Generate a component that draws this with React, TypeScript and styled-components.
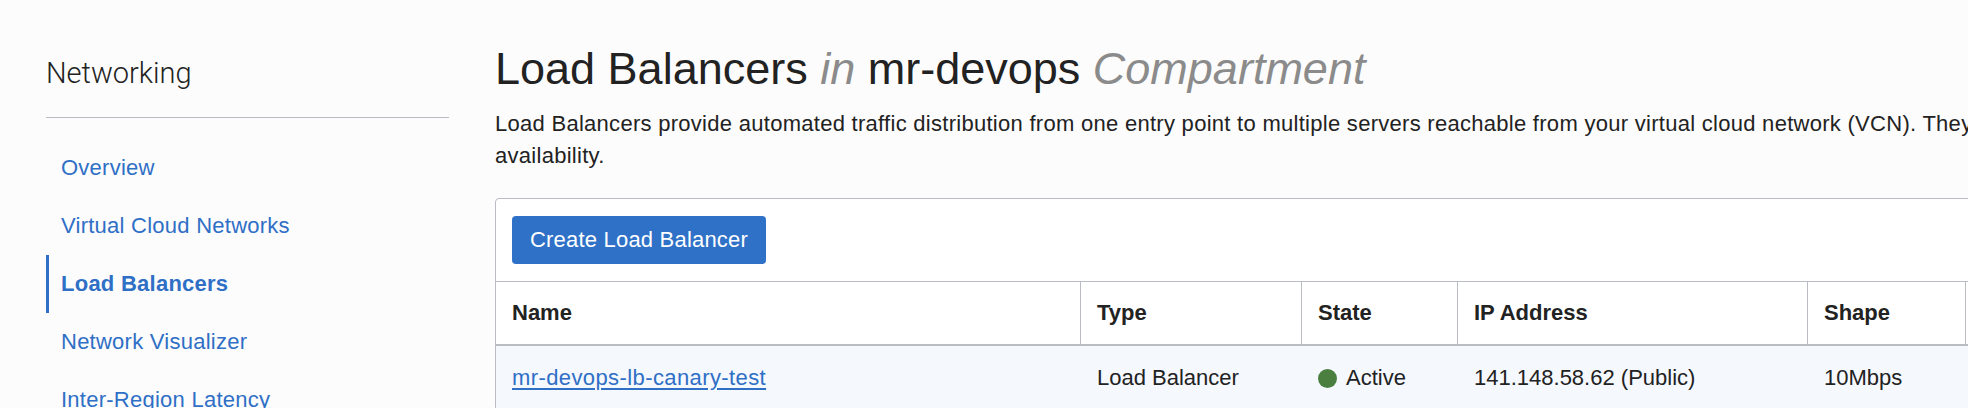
import React from "react";
import styled, { createGlobalStyle } from "styled-components";

// ─── Types ────────────────────────────────────────────────────────────────────

interface LoadBalancer {
  name:    string;
  type:    string;
  state:   string;
  ip:      string;
  shape:   string;
  created: string;
}

// ─── Data ─────────────────────────────────────────────────────────────────────

const navItems = [
  "Overview",
  "Virtual Cloud Networks",
  "Load Balancers",
  "Network Visualizer",
  "Inter-Region Latency",
];

const activeNav = "Load Balancers";

const columns = ["Name", "Type", "State", "IP Address", "Shape", "Created", "Tags"];

const balancers: LoadBalancer[] = [
  {
    name:    "mr-devops-lb-canary-test",
    type:    "Load Balancer",
    state:   "Active",
    ip:      "141.148.58.62 (Public)",
    shape:   "10Mbps",
    created: "Mon, Mar 2, 2020",
  },
];

const gridColumns = "584px 221px 156px 350px 158px 300px 200px";

// ─── Styled components ────────────────────────────────────────────────────────

const GlobalStyle = createGlobalStyle`
  html, body {
    margin: 0;
    padding: 0;
    overflow: hidden;
    background: #fcfcfc;
  }
  body {
    font-family: "Liberation Sans", Arial, sans-serif;
    color: #222;
  }
`;

const Page = styled.div`
  display: flex;
  align-items: flex-start;
  min-height: 408px;
`;

const Sidebar = styled.aside`
  flex: 0 0 auto;
  width: 495px;
  box-sizing: border-box;
  padding: 55px 46px 0;
`;

const SidebarTitle = styled.h2`
  margin: 0;
  font-family: Roboto, "Liberation Sans", sans-serif;
  font-weight: 300;
  font-size: 29px;
  line-height: 36px;
  color: #222;
`;

const Divider = styled.hr`
  margin: 26px 0 21px;
  border: 0;
  border-top: 1px solid #b9bcc3;
`;

const NavList = styled.nav`
  display: flex;
  flex-direction: column;
`;

const NavItem = styled.a<{ $active?: boolean }>`
  display: block;
  height: 58px;
  line-height: 58px;
  padding-left: 12px;
  border-left: 3px solid ${({ $active }) => ($active ? "#2f6fc6" : "transparent")};
  font-size: 22px;
  letter-spacing: 0.25px;
  font-weight: ${({ $active }) => ($active ? 700 : 400)};
  color: #2f6fc6;
  text-decoration: none;
  white-space: nowrap;
`;

const Main = styled.main`
  flex: 0 0 auto;
  width: 2200px;
  padding-top: 42px;
`;

const Title = styled.h1`
  margin: 0;
  font-size: 45px;
  line-height: 54px;
  font-weight: 400;
  color: #222;
  white-space: nowrap;
`;

const Muted = styled.em`
  color: #8b8b8b;
  font-style: italic;
`;

const Description = styled.p`
  margin: 12px 0 26px;
  font-size: 22px;
  line-height: 32px;
  letter-spacing: 0.28px;
  color: #222;
`;

const Panel = styled.section`
  background: #fff;
  border: 1px solid #b9bcc3;
  border-radius: 4px;
`;

const Toolbar = styled.div`
  display: flex;
  align-items: center;
  padding: 17px 16px;
  border-bottom: 1px solid #b9bcc3;
`;

const PrimaryButton = styled.button`
  height: 48px;
  padding: 0 18px;
  border: 0;
  border-radius: 4px;
  background: #2f71c7;
  color: #fff;
  font-family: inherit;
  font-size: 22px;
  letter-spacing: 0.2px;
  cursor: pointer;
`;

const Row = styled.div<{ $header?: boolean }>`
  display: grid;
  grid-template-columns: ${gridColumns};
  height: ${({ $header }) => ($header ? "62px" : "64px")};
  background: ${({ $header }) => ($header ? "#fff" : "#f5f8fd")};
  border-bottom: ${({ $header }) => ($header ? "2px solid #b9bcc3" : "0")};
`;

const HeadCell = styled.div<{ $first?: boolean }>`
  display: flex;
  align-items: center;
  padding-left: 16px;
  border-left: ${({ $first }) => ($first ? "0" : "1px solid #b9bcc3")};
  font-size: 22px;
  font-weight: 700;
  color: #222;
  white-space: nowrap;
  overflow: hidden;
`;

const Cell = styled.div<{ $first?: boolean }>`
  display: flex;
  align-items: center;
  padding-left: ${({ $first }) => ($first ? "16px" : "17px")};
  font-size: 22px;
  color: #222;
  white-space: nowrap;
  overflow: hidden;
`;

const NameLink = styled.a`
  color: #2f6fc6;
  letter-spacing: 0.4px;
  text-decoration: underline;
  text-underline-offset: 3px;
`;

const StatusDot = styled.span<{ $color: string }>`
  width: 19px;
  height: 19px;
  border-radius: 50%;
  background: ${({ $color }) => $color};
  margin-right: 9px;
  flex: 0 0 auto;
`;

// ─── Component ────────────────────────────────────────────────────────────────

export default function App() {
  return (
    <>
      <GlobalStyle />
      <Page>
        <Sidebar>
          <SidebarTitle>Networking</SidebarTitle>
          <Divider />
          <NavList>
            {navItems.map((item) => (
              <NavItem key={item} href="#" $active={item === activeNav}>
                {item}
              </NavItem>
            ))}
          </NavList>
        </Sidebar>

        <Main>
          <Title>
            Load Balancers <Muted>in</Muted> mr-devops <Muted>Compartment</Muted>
          </Title>
          <Description>
            Load Balancers provide automated traffic distribution from one entry point to multiple
            servers reachable from your virtual cloud network (VCN). They improve resource
            utilization, facilitate scaling, and help ensure high availability.
          </Description>

          <Panel>
            <Toolbar>
              <PrimaryButton>Create Load Balancer</PrimaryButton>
            </Toolbar>

            <Row $header>
              {columns.map((col, i) => (
                <HeadCell key={col} $first={i === 0}>{col}</HeadCell>
              ))}
            </Row>

            {balancers.map((lb) => (
              <Row key={lb.name}>
                <Cell $first><NameLink href="#">{lb.name}</NameLink></Cell>
                <Cell>{lb.type}</Cell>
                <Cell>
                  <StatusDot $color={lb.state === "Active" ? "#4a7f3f" : "#c74634"} />
                  {lb.state}
                </Cell>
                <Cell>{lb.ip}</Cell>
                <Cell>{lb.shape}</Cell>
                <Cell>{lb.created}</Cell>
                <Cell />
              </Row>
            ))}
          </Panel>
        </Main>
      </Page>
    </>
  );
}
